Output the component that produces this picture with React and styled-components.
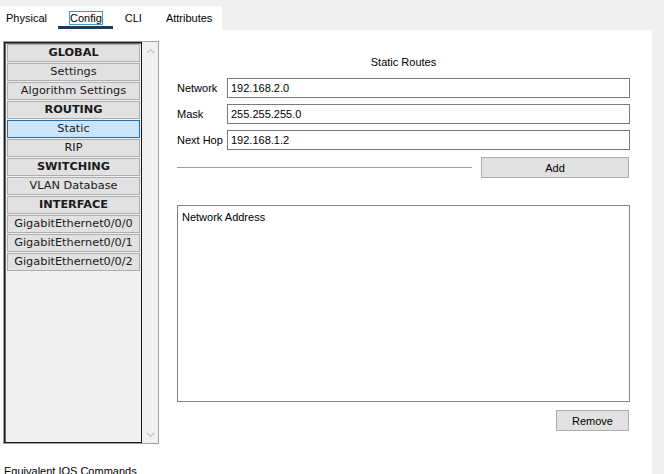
import React, { useState } from 'react'
import styled, { createGlobalStyle } from 'styled-components'

const Global = createGlobalStyle`
  html, body { margin: 0; padding: 0; }
  body {
    background: #f0f0f0;
    font-family: "Liberation Sans", Arial, sans-serif;
    font-size: 11px;
    color: #000;
    overflow: hidden;
  }
`

const menu = [
  { label: 'GLOBAL', head: true },
  { label: 'Settings' },
  { label: 'Algorithm Settings' },
  { label: 'ROUTING', head: true },
  { label: 'Static' },
  { label: 'RIP' },
  { label: 'SWITCHING', head: true },
  { label: 'VLAN Database' },
  { label: 'INTERFACE', head: true },
  { label: 'GigabitEthernet0/0/0' },
  { label: 'GigabitEthernet0/0/1' },
  { label: 'GigabitEthernet0/0/2' },
]

const tabs = ['Physical', 'Config', 'CLI', 'Attributes']

const App = () => {
  let [active, setActive] = useState('Static')

  return (
    <>
      <Global />
      <Page>
        <TabBar>
          <TabStrip>
            {tabs.map((t) => (
              <Tab key={t} $active={t === 'Config'}>
                <TabLabel $active={t === 'Config'}>{t}</TabLabel>
              </Tab>
            ))}
          </TabStrip>
        </TabBar>
        <Panel>
          <Columns>
            <Sidebar>
              <MenuList>
                {menu.map((m) => (
                  <MenuItem
                    key={m.label}
                    $head={m.head}
                    $selected={m.label === active}
                    onClick={() => !m.head && setActive(m.label)}
                  >
                    {m.label}
                  </MenuItem>
                ))}
              </MenuList>
              <ScrollTrack>
                <svg width="9" height="6" viewBox="0 0 9 6">
                  <path d="M1 5 L4.5 1.5 L8 5" fill="none" stroke="#c4c4c4" strokeWidth="1.2" />
                </svg>
                <svg width="9" height="6" viewBox="0 0 9 6">
                  <path d="M1 1 L4.5 4.5 L8 1" fill="none" stroke="#c4c4c4" strokeWidth="1.2" />
                </svg>
              </ScrollTrack>
            </Sidebar>
            <Main>
              <Title>Static Routes</Title>
              <Fields>
                <FieldRow>
                  <FieldLabel>Network</FieldLabel>
                  <TextBox defaultValue="192.168.2.0" />
                </FieldRow>
                <FieldRow>
                  <FieldLabel>Mask</FieldLabel>
                  <TextBox defaultValue="255.255.255.0" />
                </FieldRow>
                <FieldRow>
                  <FieldLabel>Next Hop</FieldLabel>
                  <TextBox defaultValue="192.168.1.2" />
                </FieldRow>
              </Fields>
              <AddRow>
                <Rule />
                <Button $width={148}>Add</Button>
              </AddRow>
              <RouteList>Network Address</RouteList>
              <BottomRow>
                <Button $width={73}>Remove</Button>
              </BottomRow>
            </Main>
          </Columns>
          <IosLabel>Equivalent IOS Commands</IosLabel>
        </Panel>
      </Page>
    </>
  )
}

const Page = styled.div`
  width: 664px;
  height: 474px;
  display: flex;
  flex-direction: column;
`

const TabBar = styled.div`
  height: 30px;
  display: flex;
  align-items: flex-end;
`

const TabStrip = styled.div`
  width: 222px;
  height: 24px;
  background: #fff;
  display: flex;
  align-items: stretch;
`

const Tab = styled.div`
  position: relative;
  display: flex;
  align-items: center;
  padding: 0 ${(p) => (p.$active ? '10px' : '11px')} 0 11px;
  &:first-child { padding-left: 5px; padding-right: 10px; }
  ${(p) =>
    p.$active &&
    `
    &::after {
      content: "";
      position: absolute;
      left: 0;
      right: 0;
      bottom: 1px;
      height: 3px;
      background: #1e3a5c;
    }
  `}
`

const TabLabel = styled.span`
  line-height: 12px;
  border: 1px solid ${(p) => (p.$active ? '#3a9ab8' : 'transparent')};
`

const Panel = styled.div`
  width: 652px;
  flex: 1;
  background: #fff;
  padding-top: 11px;
  display: flex;
  flex-direction: column;
  overflow: hidden;
`

const Columns = styled.div`
  display: flex;
  align-items: flex-start;
`

const Sidebar = styled.div`
  margin-left: 3px;
  width: 154px;
  height: 401px;
  border: 1px solid #a0a0a0;
  display: flex;
`

const MenuList = styled.div`
  width: 133px;
  border: 1px solid #1a1a1a;
  box-shadow: inset 1px 1px 0 #6d6d6d;
  background: #f0f0f0;
  padding: 1px 1px 0 2px;
  display: flex;
  flex-direction: column;
  gap: 1px;
`

const MenuItem = styled.div`
  height: 16px;
  line-height: 16px;
  border: 1px solid ${(p) => (p.$selected ? '#2a6ea8' : '#adadad')};
  background: ${(p) => (p.$selected ? '#cce4f7' : '#e1e1e1')};
  text-align: center;
  font-family: "DejaVu Sans", Verdana, sans-serif;
  font-size: 11.3px;
  font-weight: ${(p) => (p.$head ? 700 : 400)};
  color: #1a1a1a;
  white-space: nowrap;
  overflow: hidden;
  cursor: default;
`

const ScrollTrack = styled.div`
  flex: 1;
  background: #f0f0f0;
  display: flex;
  flex-direction: column;
  justify-content: space-between;
  align-items: center;
  padding: 6px 0 5px;
`

const Main = styled.div`
  margin-left: 18px;
  width: 453px;
  display: flex;
  flex-direction: column;
`

const Title = styled.div`
  text-align: center;
  height: 13px;
  line-height: 13px;
  margin-top: 15px;
  margin-bottom: 9px;
`

const Fields = styled.div`
  display: flex;
  flex-direction: column;
  gap: 6px;
`

const FieldRow = styled.div`
  display: flex;
  align-items: center;
`

const FieldLabel = styled.span`
  width: 50px;
`

const TextBox = styled.input`
  flex: 1;
  height: 20px;
  box-sizing: border-box;
  border: 1px solid #7a7a7a;
  padding: 0 3px;
  font-family: "Liberation Sans", Arial, sans-serif;
  font-size: 11px;
  color: #000;
  outline: none;
`

const AddRow = styled.div`
  display: flex;
  align-items: center;
  margin-top: 7px;
  gap: 9px;
`

const Rule = styled.div`
  width: 295px;
  height: 1px;
  background: #a0a0a0;
`

const Button = styled.button`
  width: ${(p) => p.$width}px;
  height: 21px;
  box-sizing: border-box;
  background: #e1e1e1;
  border: 1px solid #adadad;
  font-family: "Liberation Sans", Arial, sans-serif;
  font-size: 11px;
  color: #000;
  padding: 0;
`

const RouteList = styled.div`
  margin-top: 27px;
  height: 197px;
  box-sizing: border-box;
  border: 1px solid #828282;
  padding: 5px 4px;
`

const BottomRow = styled.div`
  display: flex;
  justify-content: flex-end;
  margin-top: 8px;
  padding-right: 1px;
`

const IosLabel = styled.div`
  margin-top: 21px;
  margin-left: 4px;
  line-height: 13px;
`

export default App
